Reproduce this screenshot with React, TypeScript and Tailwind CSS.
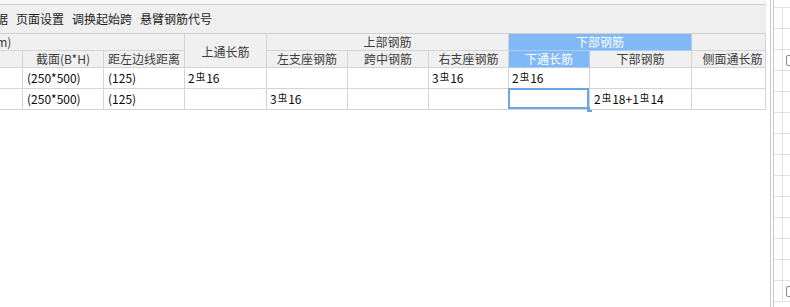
const line = "border-[#d4d4d4]";
const hd = `flex items-center justify-center overflow-hidden whitespace-nowrap border-r border-b ${line} bg-[#f0f0f0] text-[#3c3c3c]`;
const blue = "flex items-center justify-center overflow-hidden whitespace-nowrap border-r border-b border-[#a9cdf6] bg-[#80b9f6] text-white";
const cell = `relative flex items-center overflow-visible whitespace-nowrap border-r border-b ${line} bg-white pl-[3px] text-[#0a0a0a]`;

function Bar({ n, d }: { n: string; d: string }) {
  return (
    <>
      {n}
      <span className="relative -top-[3px] mx-[1px] text-[9.5px]">虫</span>
      {d}
    </>
  );
}

function Rebar({ parts }: { parts: [string, string][] }) {
  return (
    <span>
      {parts.map(([n, d], i) => (
        <span key={i}>
          {i > 0 && "+"}
          <Bar n={n} d={d} />
        </span>
      ))}
    </span>
  );
}

export default function App() {
  return (
    <div className="flex h-[307px] w-[790px] overflow-hidden bg-white text-[12px] font-['Noto_Sans_CJK_SC',sans-serif]">
      <div className="flex w-[766px] flex-col">
        <div className="h-[5px] border-b border-[#cfcfcf] bg-[#f7f7f7]" />
        <div className="flex h-[29px] items-center gap-2 border-b border-[#cfcfcf] bg-[#efefef] text-[#1e1e1e]">
          <span className="-ml-[4px]">据</span>
          <span>页面设置</span>
          <span>调换起始跨</span>
          <span>悬臂钢筋代号</span>
        </div>
        <div className="grid grid-cols-[23px_81px_81px_82px_81px_81px_80px_81px_102px_74px] grid-rows-[17px_17px_21px_21px]">
          <div className={`${hd} col-span-3 justify-start`}>
            <span className="-ml-[19px]">(mm)</span>
          </div>
          <div className={`${hd} row-span-2 pt-[3px]`}>上通长筋</div>
          <div className={`${hd} col-span-3`}>上部钢筋</div>
          <div className={`${blue} col-span-2`}>下部钢筋</div>
          <div className={hd} />

          <div className={hd} />
          <div className={hd}>截面(B*H)</div>
          <div className={hd}>距左边线距离</div>
          <div className={hd}>左支座钢筋</div>
          <div className={hd}>跨中钢筋</div>
          <div className={hd}>右支座钢筋</div>
          <div className={blue}>下通长筋</div>
          <div className={hd}>下部钢筋</div>
          <div className={`${hd} pl-[8px]`}>侧面通长筋</div>

          <div className={cell} />
          <div className={`${cell} pl-[4px]`}>(250*500)</div>
          <div className={`${cell} pl-[4px]`}>(125)</div>
          <div className={cell}>
            <Rebar parts={[["2", "16"]]} />
          </div>
          <div className={cell} />
          <div className={cell} />
          <div className={cell}>
            <Rebar parts={[["3", "16"]]} />
          </div>
          <div className={cell}>
            <Rebar parts={[["2", "16"]]} />
          </div>
          <div className={cell} />
          <div className={cell} />

          <div className={cell} />
          <div className={`${cell} pl-[4px]`}>(250*500)</div>
          <div className={`${cell} pl-[4px]`}>(125)</div>
          <div className={cell} />
          <div className={cell}>
            <Rebar parts={[["3", "16"]]} />
          </div>
          <div className={cell} />
          <div className={cell} />
          <div className={cell}>
            <div className="absolute -left-[1px] -top-[1px] right-0 bottom-0 border-2 border-[#6aa6e4]" />
            <div className="absolute -bottom-[3px] -right-[3px] h-[5px] w-[5px] bg-[#6aa6e4]" />
          </div>
          <div className={`${cell} pl-[4px]`}>
            <Rebar
              parts={[
                ["2", "18"],
                ["1", "14"],
              ]}
            />
          </div>
          <div className={cell} />
        </div>
      </div>
      <div className="w-[5px] border-r border-[#c4c4c4]" />
      <div className="w-[3px] border-r border-[#c8c8c8]" />
      <div className="flex flex-1 flex-col overflow-hidden">
        <div className="h-[8px] border-b border-[#e2e2e2]" />
        {Array.from({ length: 14 }).map((_, i) => (
          <div key={i} className="flex h-[21px] border-b border-[#e2e2e2]">
            <div className="w-[9px] border-r border-[#e2e2e2]" />
            <div className="flex flex-1 items-center overflow-hidden">
              {(i === 2 || i === 13) && (
                <div className="ml-[3px] h-[11px] w-[10px] shrink-0 rounded-[2px] border border-[#8a8a8a]" />
              )}
            </div>
          </div>
        ))}
      </div>
    </div>
  );
}
